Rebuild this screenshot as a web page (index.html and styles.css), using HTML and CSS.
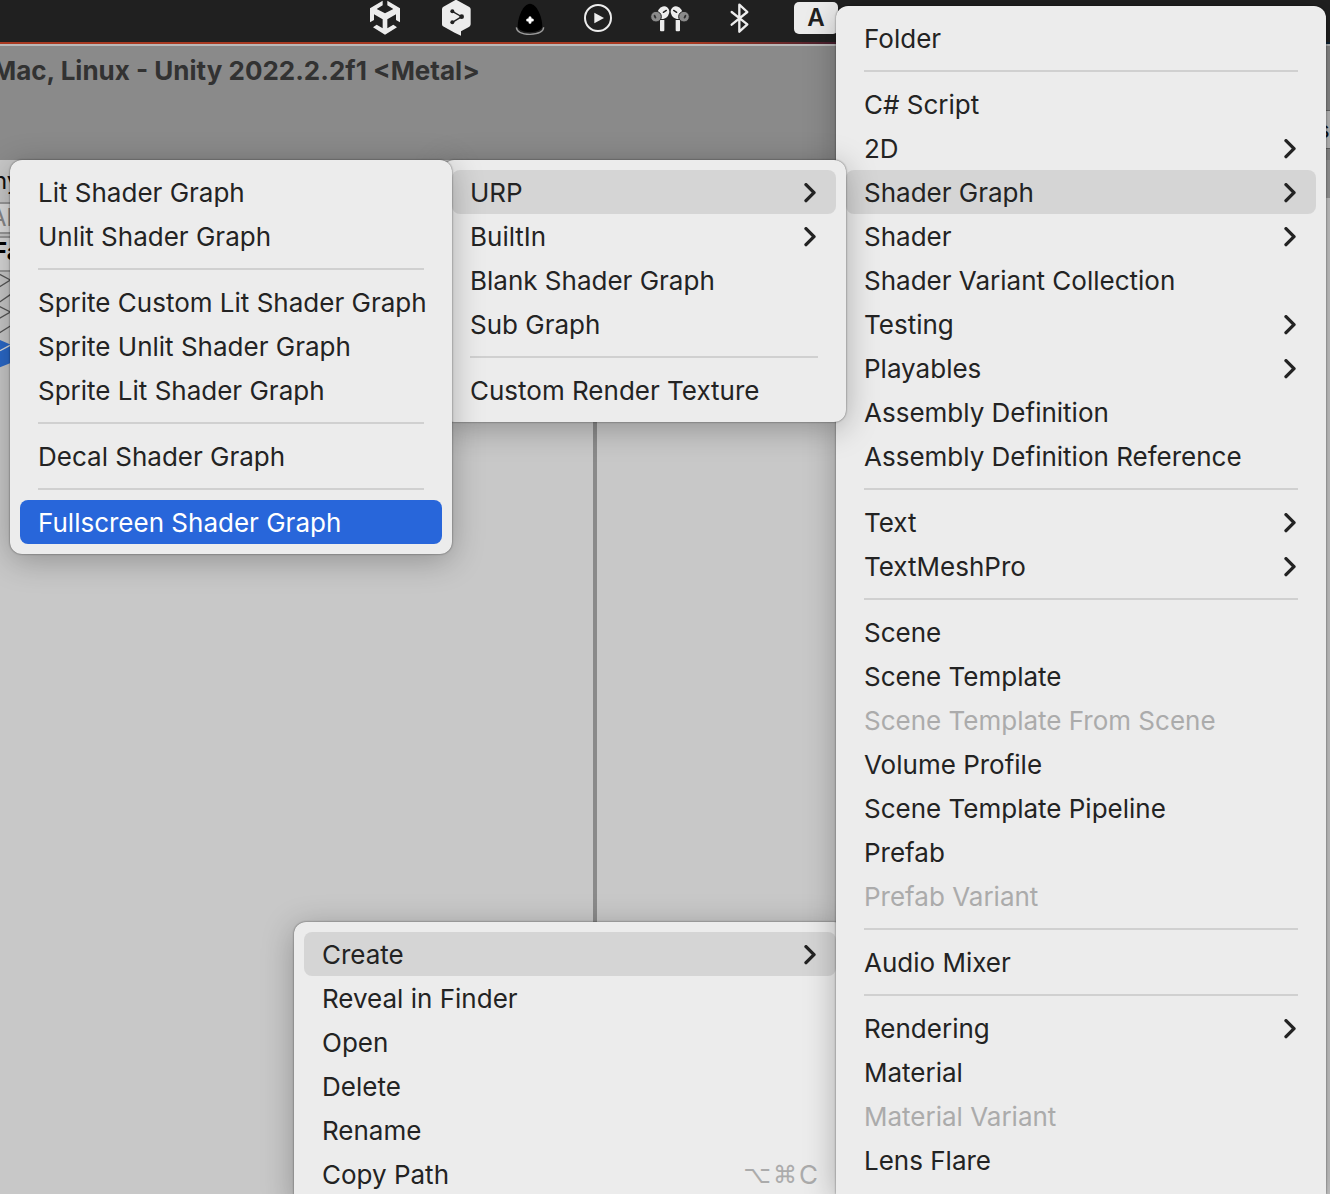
FILE: index.html
```html
<!DOCTYPE html>
<html lang="en">
<head>
<meta charset="utf-8">
<title>Unity – Create Shader Graph</title>
<link rel="stylesheet" href="styles.css">
</head>
<body>
<svg class="defs" aria-hidden="true">
  <symbol id="chevron" viewBox="0 0 36 60"><path d="M6 5L30 29L6 53" fill="none" stroke="currentColor" stroke-width="10" stroke-linecap="round" stroke-linejoin="round"/></symbol>
</svg>

<header class="menubar">
  <button class="status" aria-label="Unity Hub"><svg width="34" height="42" viewBox="54 0 102 126" fill="#ececec">
    <path d="M98 2V16L80 27L105 40L130 27L112 16V2L150 25V67L138 60V43L112 58V85L130 74L141 82L105 104L69 82L80 74L98 85V58L72 43V60L60 67V25Z"/>
  </svg></button>
  <button class="status" aria-label="DeepL"><svg width="36" height="42" viewBox="264 0 108 126">
    <path d="M318 -1L358 21Q362 24 362 28V73Q362 77 358 80L333 94V107L314 98L279 79Q276 77 276 73V28Q276 24 279 21Z" fill="#ececec"/>
    <path d="M307 34L335 50L307 67" fill="none" stroke="#202020" stroke-width="4"/>
    <g fill="#202020"><circle cx="307" cy="34" r="6"/><circle cx="335" cy="50" r="7"/><circle cx="307" cy="67" r="6"/></g>
  </svg></button>
  <button class="status" aria-label="Capture"><svg width="38" height="42" viewBox="480 0 114 126">
    <path d="M499 82Q501 102 540 103Q580 102 581 82" fill="none" stroke="#9b9b9b" stroke-width="4"/>
    <path d="M540 11C560 12 576 48 577 78C577 102 503 102 503 78C504 48 520 12 540 11Z" fill="#000"/>
    <path d="M540 53V67M533 60H547" stroke="#fff" stroke-width="9" stroke-linecap="round"/>
  </svg></button>
  <button class="status" aria-label="Now Playing"><svg width="28" height="42" viewBox="702 0 84 126">
    <circle cx="744" cy="54" r="39" fill="none" stroke="#ececec" stroke-width="6"/><path d="M733 38L762 54L733 70Z" fill="#ececec"/>
  </svg></button>
  <button class="status" aria-label="AirPods"><svg width="44" height="42" viewBox="144 0 132 126">
    <g id="pod"><path d="M180 91V60H193V91Q193 94 190 94H183Q180 94 180 91Z" fill="#ececec"/><ellipse cx="190" cy="38" rx="17" ry="20" transform="rotate(35 190 38)" fill="#ececec"/><path d="M190 37L199 31" stroke="#202020" stroke-width="4" stroke-linecap="round"/><circle cx="168" cy="50" r="16" fill="#8b8b8b" stroke="#202020" stroke-width="3"/><ellipse cx="165" cy="50" rx="3" ry="6" fill="#333" transform="rotate(-30 165 50)"/></g>
    <use href="#pod" transform="translate(420 0) scale(-1 1)"/>
  </svg></button>
  <button class="status" aria-label="Bluetooth"><svg width="30" height="42" viewBox="384 0 90 126">
    <path d="M395 36L442 73L418 95V14L442 36L395 74" fill="none" stroke="#ececec" stroke-width="7" stroke-linecap="round" stroke-linejoin="round"/>
  </svg></button>
  <button class="status input-source" aria-label="Input source A">A</button>
</header>

<main class="window">
  <header class="titlebar"><h1>Mac, Linux - Unity 2022.2.2f1 &lt;Metal&gt;</h1></header>
  <div class="panes">
    <section class="hierarchy">
      <div class="tab">ny</div>
      <div class="search">All</div>
      <div class="heading">Fa</div>
      <svg class="tree" width="20" height="96" viewBox="0 0 60 288" aria-hidden="true">
        <path d="M-4 5L31 24L-4 46M31 68L-4 92M-4 102L31 120L-4 140M31 162L-4 184" fill="none" stroke="#555" stroke-width="4"/>
        <path d="M0 204L60 230V262L0 286Z" fill="#2a68c8"/><path d="M0 236L34 218" stroke="#ddd" stroke-width="4"/>
      </svg>
    </section>
    <section class="project"></section>
  </div>
  <aside class="edge"><span class="edge-tab">s</span><span class="edge-bar"></span></aside>
</main>

<ul class="menu context-menu">
  <li><button class="open">Create<svg class="chev"><use href="#chevron"/></svg></button></li>
  <li><button>Reveal in Finder</button></li>
  <li><button>Open</button></li>
  <li><button>Delete</button></li>
  <li><button>Rename</button></li>
  <li><button>Copy Path<kbd><span>⌥</span><span>⌘</span>C</kbd></button></li>
</ul>

<ul class="menu create-menu">
  <li><button>Folder</button></li>
  <li class="sep"><hr></li>
  <li><button>C# Script</button></li>
  <li><button>2D<svg class="chev"><use href="#chevron"/></svg></button></li>
  <li><button class="open">Shader Graph<svg class="chev"><use href="#chevron"/></svg></button></li>
  <li><button>Shader<svg class="chev"><use href="#chevron"/></svg></button></li>
  <li><button>Shader Variant Collection</button></li>
  <li><button>Testing<svg class="chev"><use href="#chevron"/></svg></button></li>
  <li><button>Playables<svg class="chev"><use href="#chevron"/></svg></button></li>
  <li><button>Assembly Definition</button></li>
  <li><button>Assembly Definition Reference</button></li>
  <li class="sep"><hr></li>
  <li><button>Text<svg class="chev"><use href="#chevron"/></svg></button></li>
  <li><button>TextMeshPro<svg class="chev"><use href="#chevron"/></svg></button></li>
  <li class="sep"><hr></li>
  <li><button>Scene</button></li>
  <li><button>Scene Template</button></li>
  <li><button disabled>Scene Template From Scene</button></li>
  <li><button>Volume Profile</button></li>
  <li><button>Scene Template Pipeline</button></li>
  <li><button>Prefab</button></li>
  <li><button disabled>Prefab Variant</button></li>
  <li class="sep"><hr></li>
  <li><button>Audio Mixer</button></li>
  <li class="sep"><hr></li>
  <li><button>Rendering<svg class="chev"><use href="#chevron"/></svg></button></li>
  <li><button>Material</button></li>
  <li><button disabled>Material Variant</button></li>
  <li><button>Lens Flare</button></li>
</ul>

<ul class="menu graph-menu">
  <li><button class="open">URP<svg class="chev"><use href="#chevron"/></svg></button></li>
  <li><button>BuiltIn<svg class="chev"><use href="#chevron"/></svg></button></li>
  <li><button>Blank Shader Graph</button></li>
  <li><button>Sub Graph</button></li>
  <li class="sep"><hr></li>
  <li><button>Custom Render Texture</button></li>
</ul>

<ul class="menu urp-menu">
  <li><button>Lit Shader Graph</button></li>
  <li><button>Unlit Shader Graph</button></li>
  <li class="sep"><hr></li>
  <li><button>Sprite Custom Lit Shader Graph</button></li>
  <li><button>Sprite Unlit Shader Graph</button></li>
  <li><button>Sprite Lit Shader Graph</button></li>
  <li class="sep"><hr></li>
  <li><button>Decal Shader Graph</button></li>
  <li class="sep"><hr></li>
  <li><button class="selected">Fullscreen Shader Graph</button></li>
</ul>
</body>
</html>
```
FILE: styles.css
```css
* { box-sizing: border-box; }

body {
  margin: 0;
  position: relative;
  display: flex;
  flex-direction: column;
  height: 100vh;
  overflow: hidden;
  background: #c8c8c8;
  color: #232323;
  font: 26px/44px Inter, "Liberation Sans", sans-serif;
}

button {
  border: 0;
  margin: 0;
  padding: 0;
  background: none;
  color: inherit;
  font: inherit;
}

.defs { position: absolute; width: 0; height: 0; }

/* System menu bar */
.menubar {
  display: flex;
  align-items: flex-start;
  gap: 36px;
  height: 44px;
  padding-left: 368px;
  background: linear-gradient(90deg, #a93a22 0 52%, #3a1c30 64%, #0c2233) 0 42px / 100% 2px no-repeat #202020;
}
.status svg { display: block; }
.input-source {
  width: 44px;
  height: 32px;
  margin-top: 2px;
  border-radius: 5px;
  background: #ececec;
  color: #202020;
  font-size: 24px;
  font-weight: 600;
  line-height: 32px;
}

/* Editor window behind the menus */
.window {
  position: relative;
  flex: 1;
  display: flex;
  flex-direction: column;
}
.titlebar {
  height: 116px;
  border-top: 2px solid #b9b9b9;
  background: #8a8a8a;
}
.titlebar h1 {
  margin: 0 0 0 -8px;
  padding-top: 3px;
  color: #323232;
  font-size: 26px;
  font-weight: 700;
  line-height: 44px;
}
.panes { flex: 1; display: flex; }
.hierarchy {
  width: 597px;
  border-right: 4px solid #8a8a8a;
  color: #111;
  font-size: 24px;
}
.project { flex: 1; }
.tab { height: 42px; line-height: 42px; text-indent: -7px; }
.search {
  height: 32px;
  border: solid #999;
  border-width: 2px 0;
  background: #dedede;
  color: #888;
  line-height: 28px;
  text-indent: -10px;
}
.heading {
  height: 36px;
  border: solid #999;
  border-width: 2px 0;
  margin-top: 2px;
  background: #d8d8d8;
  color: #000;
  font-weight: 700;
  line-height: 28px;
  text-indent: -7px;
}
.tree { display: block; }
.edge {
  position: absolute;
  top: 0;
  right: 0;
  width: 8px;
  padding-top: 66px;
  font-size: 24px;
}
.edge-tab {
  display: block;
  height: 39px;
  border: solid #666;
  border-width: 1px 0;
  background: #bdbdbd;
  color: #111;
  line-height: 38px;
  text-indent: -5px;
}
.edge-bar { display: block; height: 38px; margin-top: 11px; background: #999; }

/* Cascading menus */
.menu {
  position: absolute;
  margin: 0;
  padding: 10px;
  list-style: none;
  border-radius: 12px;
  background: #ececec;
  box-shadow: 0 0 2px rgba(0, 0, 0, .6), 0 6px 32px rgba(0, 0, 0, .28);
}
.menu button {
  display: flex;
  align-items: center;
  width: 100%;
  height: 44px;
  padding: 2px 18px 0;
  border-radius: 8px;
  text-align: left;
  white-space: nowrap;
}
.menu .open { background: #d5d5d5; }
.menu .selected { background: #2866da; color: #fff; }
.menu button:disabled { color: #ababab; }
.chev { width: 12px; height: 20px; margin: 0 2px 0 auto; }
.sep { display: flex; align-items: center; height: 22px; padding: 0 18px; }
.sep hr { flex: 1; height: 2px; margin: 0; border: 0; background: #d0d0d0; }
.menu kbd {
  display: flex;
  gap: 2px;
  margin-left: auto;
  color: #ababab;
  font: inherit;
}
.menu kbd span { font-family: "DejaVu Sans", sans-serif; font-size: 24px; }

.context-menu { top: 922px; left: 294px; width: 552px; }
.create-menu { top: 6px; bottom: 0; left: 836px; right: 4px; border-radius: 12px 12px 0 0; }
.graph-menu { top: 160px; left: 442px; width: 404px; }
.urp-menu { top: 160px; left: 10px; width: 442px; }
```
